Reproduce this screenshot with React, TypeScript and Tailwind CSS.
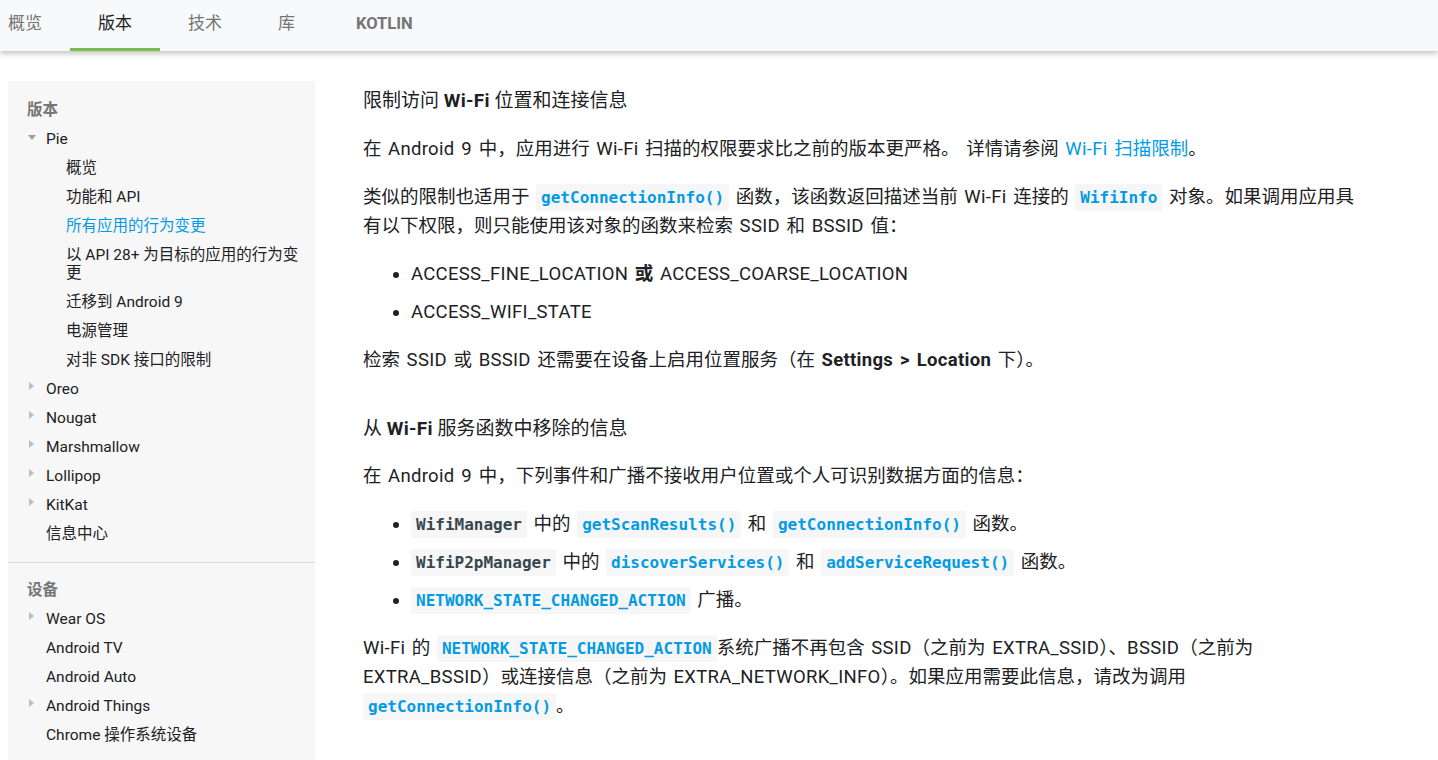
const code = "font-['DejaVu_Sans_Mono',monospace] font-bold text-[16px] leading-none [word-spacing:0px] bg-[#f6f6f6] px-[5px] py-[4px] rounded-[2px]";
const blue = "text-[#039be5]";
const dark = "text-[#37474f]";

// Latin runs render a little wider in the reference than CJK
const E = ({ children }: { children: React.ReactNode }) => <span className="tracking-[0.3px]">{children}</span>;

const Tab = ({ label, active, bold, first }: { label: string; active?: boolean; bold?: boolean; first?: boolean }) => (
  <div
    className={`h-[51px] flex items-center border-b-[3px] ${first ? "pl-[8px] pr-[28px]" : bold ? "pl-[33px] pr-[28px]" : "px-[28px]"} ${
      active ? "border-[#7cbd4f] text-[#202124]" : "border-transparent text-[#757575]"
    } ${bold ? "font-bold text-[16.5px]" : "text-[17px]"}`}
  >
    {label}
  </div>
);

const Arrow = ({ open }: { open?: boolean }) =>
  open ? (
    <svg width="10" height="6" viewBox="0 0 10 6" className="absolute left-[-19px] top-[10px]">
      <path d="M1 0 L9 0 L5 5 Z" fill="#9e9e9e" />
    </svg>
  ) : (
    <svg width="6" height="10" viewBox="0 0 6 10" className="absolute left-[-17px] top-[6px]">
      <path d="M0 1 L5 5 L0 9 Z" fill="#bdbdbd" />
    </svg>
  );

const Item = ({ children, arrow, open, sub, active }: { children: React.ReactNode; arrow?: boolean; open?: boolean; sub?: boolean; active?: boolean }) => (
  <div className={`relative py-[5.25px] leading-[18.5px] ${sub ? "ml-[58px]" : "ml-[38px]"} ${active ? "text-[#039be5]" : "text-[#202124]"}`}>
    {arrow && <Arrow open={open} />}
    {children}
  </div>
);

export default function App() {
  return (
    <div className="min-h-[760px] bg-white font-['Roboto','Noto_Sans_CJK_SC',sans-serif] text-[#202124]">
      <div className="relative z-10 h-[51px] bg-[#f8f9fa] shadow-[0_2px_6px_rgba(0,0,0,0.28)] flex">
        <Tab label="概览" first />
        <Tab label="版本" active />
        <Tab label="技术" />
        <Tab label="库" />
        <Tab label="KOTLIN" bold />
      </div>

      <div className="flex pt-[30px] gap-[48px]">
        <aside className="ml-[8px] w-[307px] shrink-0 bg-[#f7f7f7] pt-[14.5px] pb-[20px] text-[15.5px] min-h-[680px]">
          <div className="ml-[19px] py-[5.25px] leading-[18.5px] font-bold text-[#757575]">版本</div>
          <Item arrow open>Pie</Item>
          <Item sub>概览</Item>
          <Item sub>功能和 API</Item>
          <Item sub active>所有应用的行为变更</Item>
          <Item sub>以 API 28+ 为目标的应用的行为变<br />更</Item>
          <Item sub>迁移到 Android 9</Item>
          <Item sub>电源管理</Item>
          <Item sub>对非 SDK 接口的限制</Item>
          <Item arrow>Oreo</Item>
          <Item arrow>Nougat</Item>
          <Item arrow>Marshmallow</Item>
          <Item arrow>Lollipop</Item>
          <Item arrow>KitKat</Item>
          <Item>信息中心</Item>
          <div className="my-[13px] h-px bg-[#d5dae0]" />
          <div className="ml-[19px] py-[5.25px] leading-[18.5px] font-bold text-[#757575]">设备</div>
          <Item arrow>Wear OS</Item>
          <Item>Android TV</Item>
          <Item>Android Auto</Item>
          <Item arrow>Android Things</Item>
          <Item>Chrome 操作系统设备</Item>
        </aside>

        <main className="w-[1045px] pt-[4.5px] text-[18.5px] leading-[29px] [word-spacing:2px]">
          <h3 className="text-[19px] [word-spacing:0px]">限制访问 <b><E>Wi-Fi</E></b> 位置和连接信息</h3>
          <p className="mt-[20px]">
            在 <E>Android 9</E> 中，应用进行 <E>Wi-Fi</E> 扫描的权限要求比之前的版本更严格。 详情请参阅{" "}
            <span className={blue}><E>Wi-Fi</E> 扫描限制</span>。
          </p>
          <p className="mt-[19px]">
            类似的限制也适用于 <code className={`${code} ${blue}`}>getConnectionInfo()</code> 函数，该函数返回描述当前 <E>Wi-Fi</E> 连接的{" "}
            <code className={`${code} ${blue}`}>WifiInfo</code> 对象。如果调用应用具
            <br />
            有以下权限，则只能使用该对象的函数来检索 <E>SSID</E> 和 <E>BSSID</E> 值：
          </p>
          <ul className="mt-[19px] ml-[48px] list-disc space-y-[9px]">
            <li><E>ACCESS_FINE_LOCATION</E> <b>或</b> <E>ACCESS_COARSE_LOCATION</E></li>
            <li><E>ACCESS_WIFI_STATE</E></li>
          </ul>
          <p className="mt-[19px]">
            检索 <E>SSID</E> 或 <E>BSSID</E> 还需要在设备上启用位置服务（在 <b><E>Settings &gt; Location</E></b> 下）。
          </p>

          <h3 className="mt-[39px] text-[19px] [word-spacing:0px]">从 <b><E>Wi-Fi</E></b> 服务函数中移除的信息</h3>
          <p className="mt-[19px]">在 <E>Android 9</E> 中，下列事件和广播不接收用户位置或个人可识别数据方面的信息：</p>
          <ul className="mt-[19px] ml-[48px] list-disc space-y-[9px]">
            <li>
              <code className={`${code} ${dark}`}>WifiManager</code> 中的 <code className={`${code} ${blue}`}>getScanResults()</code> 和{" "}
              <code className={`${code} ${blue}`}>getConnectionInfo()</code> 函数。
            </li>
            <li>
              <code className={`${code} ${dark}`}>WifiP2pManager</code> 中的 <code className={`${code} ${blue}`}>discoverServices()</code> 和{" "}
              <code className={`${code} ${blue}`}>addServiceRequest()</code> 函数。
            </li>
            <li>
              <code className={`${code} ${blue}`}>NETWORK_STATE_CHANGED_ACTION</code> 广播。
            </li>
          </ul>
          <p className="mt-[19px]">
            <E>Wi-Fi</E> 的 <code className={`${code} ${blue}`}>NETWORK_STATE_CHANGED_ACTION</code>系统广播不再包含 <E>SSID</E>（之前为 <E>EXTRA_SSID</E>）、<E>BSSID</E>（之前为
            <br />
            <E>EXTRA_BSSID</E>）或连接信息（之前为 <E>EXTRA_NETWORK_INFO</E>）。如果应用需要此信息，请改为调用
            <br />
            <code className={`${code} ${blue}`}>getConnectionInfo()</code>。
          </p>
        </main>
      </div>
    </div>
  );
}
